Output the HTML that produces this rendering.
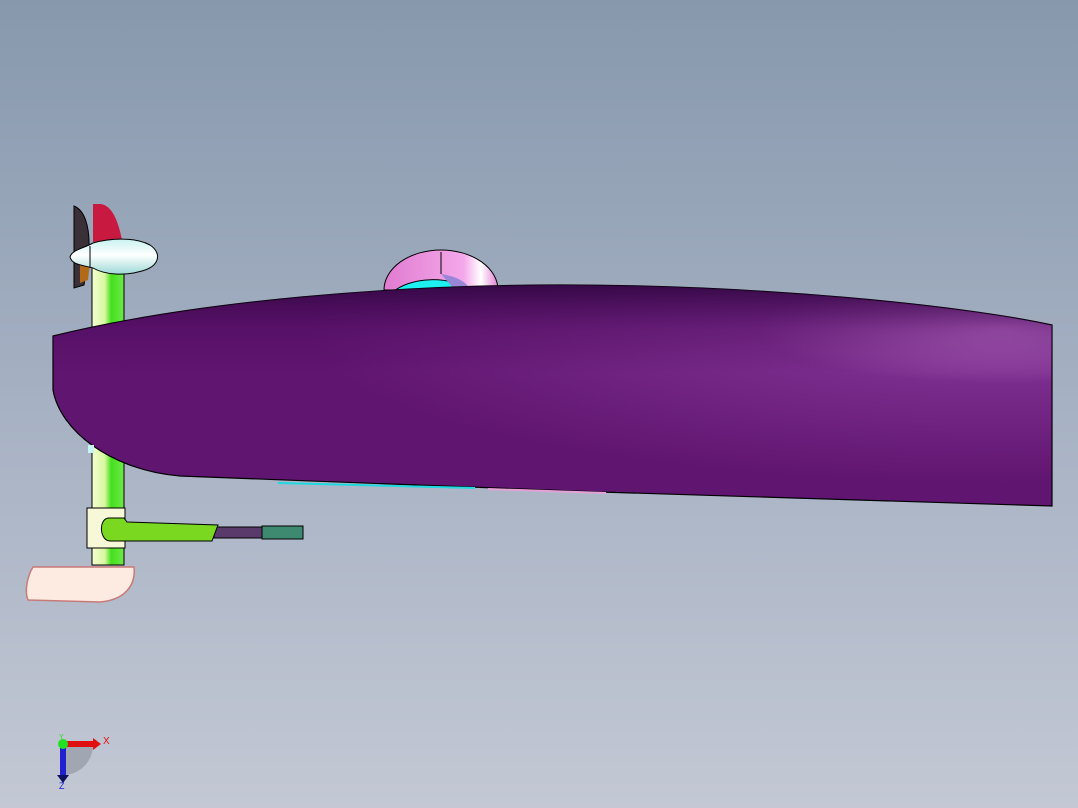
<!DOCTYPE html>
<html><head><style>
html,body{margin:0;padding:0;width:1078px;height:808px;overflow:hidden;background:linear-gradient(#8798ad,#a6b1c3 50%,#c3c8d4);}
svg{position:absolute;left:0;top:0}
</style></head><body>
<svg width="1078" height="808" viewBox="0 0 1078 808">
<defs>
<linearGradient id="pole" x1="0" x2="1"><stop offset="0" stop-color="#f4ffd0"/><stop offset="0.4" stop-color="#d8f7a0"/><stop offset="0.6" stop-color="#44e01c"/><stop offset="1" stop-color="#6fe84a"/></linearGradient>
<radialGradient id="hull" cx="0.95" cy="0.2" r="0.7"><stop offset="0" stop-color="#b76bc6"/><stop offset="0.35" stop-color="#7a2c8c"/><stop offset="1" stop-color="#601570"/></radialGradient>
<linearGradient id="hullTop" x1="0" y1="0" x2="0" y2="1"><stop offset="0" stop-color="#2f0640" stop-opacity="0.9"/><stop offset="0.2" stop-color="#4a0a5a" stop-opacity="0.4"/><stop offset="0.4" stop-color="#4a0a5a" stop-opacity="0"/></linearGradient>
<linearGradient id="pod" x1="0" y1="0" x2="0" y2="1"><stop offset="0" stop-color="#c8f2f0"/><stop offset="0.45" stop-color="#ffffff"/><stop offset="1" stop-color="#9ed8d6"/></linearGradient>
<linearGradient id="torus" x1="0" x2="1"><stop offset="0" stop-color="#e07bd0"/><stop offset="0.7" stop-color="#f4a8ea"/><stop offset="0.85" stop-color="#ffffff"/><stop offset="1" stop-color="#e27fd4"/></linearGradient>
</defs>
<!-- torus -->
<path d="M384,290 A57,40 0 0 1 498,290 Z" fill="url(#torus)" stroke="#000" stroke-width="1"/>
<path d="M393,292 A48,28 0 0 1 470,290 Z" fill="#1ff0f0" stroke="#000" stroke-width="1"/>
<path d="M441,274 A40,20 0 0 1 470,290 L455,290 Z" fill="#9a86d6"/>
<line x1="441" y1="252" x2="441" y2="274" stroke="#000"/>
<!-- prop -->
<path d="M74,206 C84,210 90,225 89,250 L84,285 L74,288 Z" fill="#3a3038" stroke="#000" stroke-width="1"/>
<path d="M80,260 L90,262 L88,280 L80,283 Z" fill="#b36a18"/>
<!-- red fin -->
<path d="M93,204 L101,204 C112,206 118,220 122,240 L93,242 Z" fill="#c81a40"/>
<!-- pole -->
<rect x="92" y="265" width="32" height="300" fill="url(#pole)" stroke="#000" stroke-width="1"/>
<!-- pod -->
<path d="M70,257 C72,250 82,249 93,243 C110,238 135,237 150,245 C162,253 160,266 142,271 C125,276 105,275 93,268 C82,265 72,265 70,257 Z" fill="url(#pod)" stroke="#000" stroke-width="1"/>
<line x1="90" y1="246" x2="90" y2="268" stroke="#000"/>
<!-- hull -->
<path d="M53,336 C200,300 400,285 560,285 C760,285 960,305 1052,325 L1052,506 L600,492 L180,476 C110,470 60,430 53,390 Z" fill="url(#hull)" stroke="#000" stroke-width="1.2"/>
<path d="M53,336 C200,300 400,285 560,285 C760,285 960,305 1052,325 L1052,506 L600,492 L180,476 C110,470 60,430 53,390 Z" fill="url(#hullTop)"/>
<!-- bottom strips -->
<path d="M278,483 L475,488" stroke="#20d8e0" stroke-width="2"/>
<path d="M488,489 L606,493" stroke="#e8a0d8" stroke-width="2"/>
<rect x="88" y="445" width="6" height="8" fill="#c8f4f4"/>
<!-- collar -->
<rect x="87" y="508" width="38" height="40" fill="#f6f8d8" stroke="#000" stroke-width="1"/>
<!-- rods -->
<rect x="214" y="527" width="48" height="11" fill="#5a3a6a" stroke="#000" stroke-width="1"/>
<rect x="262" y="526" width="41" height="13" fill="#3e8a70" stroke="#000" stroke-width="1"/>
<!-- tiller -->
<path d="M108,518 L124,518 L127,522 L218,525 L212,541 L110,541 C100,541 98,520 108,518 Z" fill="#7ad820" stroke="#000" stroke-width="1"/>
<!-- foot -->
<path d="M33,567 L134,567 C136,585 125,600 100,602 L28,600 C24,590 28,575 33,567 Z" fill="#fdeae0" stroke="#c87a78" stroke-width="1.5"/>
<!-- triad -->
<path d="M63,744 L63,775 A30,30 0 0 0 93,744 Z" fill="#8c939c" opacity="0.6"/>
<rect x="63" y="741" width="32" height="6" fill="#e01010"/>
<path d="M93,738 L101,744 L93,750 Z" fill="#e01010"/>
<rect x="60" y="744" width="6" height="32" fill="#2020d0"/>
<path d="M57,775 L69,775 L63,783 Z" fill="#101060"/>
<circle cx="63" cy="744" r="5" fill="#22e022"/>
<text x="103" y="744" font-family="Liberation Sans,sans-serif" font-size="10" fill="#e01010">X</text>
<text x="59" y="789" font-family="Liberation Sans,sans-serif" font-size="9" fill="#2020d0">Z</text>
<text x="59" y="739" font-family="Liberation Sans,sans-serif" font-size="7" fill="#22e022">Y</text>
</svg>
</body></html>
